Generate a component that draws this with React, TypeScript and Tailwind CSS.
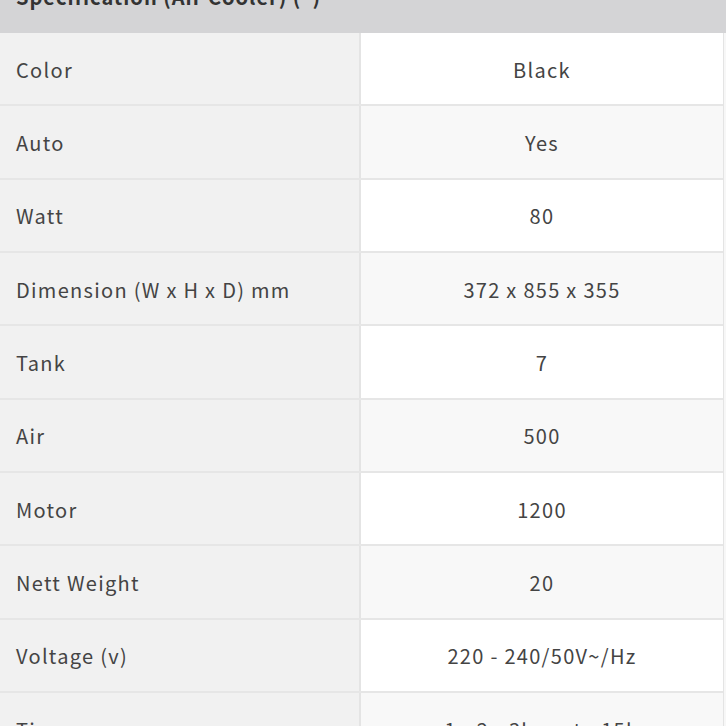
const rows: [string, string][] = [
  ['Color', 'Black'],
  ['Auto', 'Yes'],
  ['Watt', '80'],
  ['Dimension (W x H x D) mm', '372 x 855 x 355'],
  ['Tank', '7'],
  ['Air', '500'],
  ['Motor', '1200'],
  ['Nett Weight', '20'],
  ['Voltage (v)', '220 - 240/50V~/Hz'],
  ['Timer', '1 - 2 - 3h up to 15h'],
];

export default function App() {
  return (
    <div
      className="h-[726px] w-[726px] overflow-hidden bg-[#f7f7f7] text-[#444]"
      style={{ fontFamily: '"Noto Sans CJK SC", "Noto Sans", sans-serif' }}
    >
      {/* Header (mostly scrolled out of view) */}
      <div className="-mt-[40px] flex h-[73px] items-center bg-[#d4d4d6] px-4">
        <span className="text-[20px] font-bold tracking-[1px] text-[#333]">Specification (Air Cooler) (*)</span>
      </div>

      {/* Spec rows */}
      <div className="w-[724px] border-r border-[#e4e4e4]">
        {rows.map(([label, value], i) => (
          <div key={label} className="flex h-[73.34px] border-b-2 border-[#e6e6e6]">
            <div className="flex w-[361px] items-center border-r-2 border-[#e4e4e4] bg-[#f1f1f1] pl-4 pt-[2px] text-[20px] tracking-[1.3px]">
              {label}
            </div>
            <div
              className={
                'flex flex-1 items-center justify-center pt-[2px] text-[20px] tracking-[1.3px] ' +
                (i % 2 === 0 ? 'bg-white' : 'bg-[#f8f8f8]')
              }
            >
              {value}
            </div>
          </div>
        ))}
      </div>
    </div>
  );
}
